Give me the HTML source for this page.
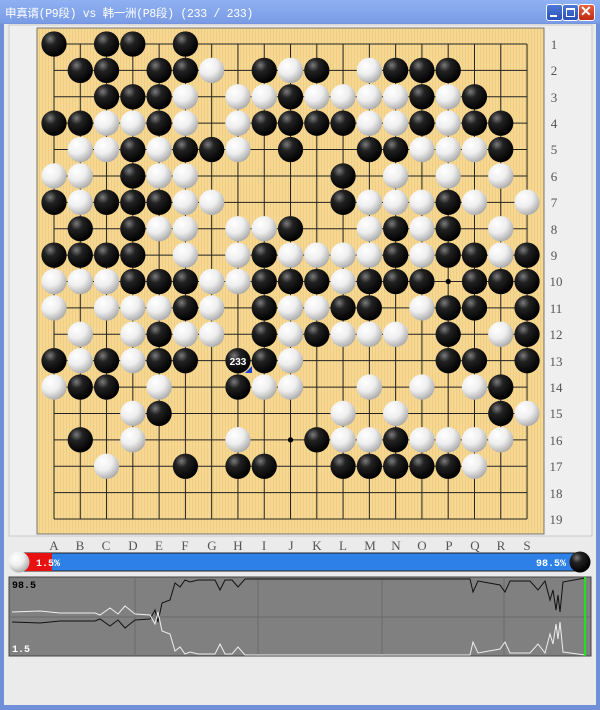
<!DOCTYPE html>
<html><head><meta charset="utf-8"><style>
body{margin:0;width:600px;height:710px;overflow:hidden;background:#6f8fd8;font-family:"Liberation Sans","Noto Sans CJK SC",sans-serif}
#win{position:absolute;left:0;top:0;width:600px;height:710px;background:linear-gradient(#8fb0f2,#7a9ce6 23px,#6f8fd8 24px);}
#title{position:absolute;left:5px;top:5px;color:#fff;font-size:11.5px;font-family:"Liberation Mono","Noto Sans CJK SC",monospace;letter-spacing:-0.3px}
#body{position:absolute;left:4px;top:24px;width:592px;height:681px;background:#ebebeb}
.btn{position:absolute;top:4px;width:15px;height:15px;border:1px solid #fff;border-radius:3px;background:linear-gradient(#4f78d8,#2850b8)}
</style></head><body>
<div id="win">
<div id="title">申真谞(P9段) vs 韩一洲(P8段) (233 / 233)</div>
<div class="btn" style="left:546px"><div style="position:absolute;left:3px;top:10px;width:7px;height:2px;background:#fff"></div></div>
<div class="btn" style="left:562px"><div style="position:absolute;left:3px;top:3px;width:7px;height:6px;border:1px solid #fff;border-top-width:2px"></div></div>
<div class="btn" style="left:578px;background:linear-gradient(#e86040,#c02810)"><div style="position:absolute;left:1px;top:-2px;color:#fff;font-size:14px;font-weight:bold">✕</div></div>
<div id="body"></div>
<svg width="600" height="710" style="position:absolute;left:0;top:0">
<defs>
<pattern id="wood" width="3" height="10" patternUnits="userSpaceOnUse"><rect width="3" height="10" fill="#f7d892"/><rect width="1" height="10" fill="#efcd82"/></pattern>
<radialGradient id="gb" cx="0.35" cy="0.3" r="0.7"><stop offset="0" stop-color="#7a7a7a"/><stop offset="0.35" stop-color="#222"/><stop offset="1" stop-color="#000"/></radialGradient>
<radialGradient id="gw" cx="0.35" cy="0.3" r="0.75"><stop offset="0" stop-color="#fff"/><stop offset="0.5" stop-color="#eee"/><stop offset="1" stop-color="#a8a8a8"/></radialGradient>
<circle id="B" r="0.48" fill="url(#gb)"/>
<circle id="W" r="0.48" fill="url(#gw)"/>
</defs>
<rect x="9" y="25" width="583" height="511" fill="#efefef" stroke="#c8c8c8"/>
<rect x="37" y="28" width="507" height="506" fill="url(#wood)" stroke="#777"/>
<g transform="translate(54,44) scale(26.28,26.39)" stroke="#222" stroke-width="1">
<path vector-effect="non-scaling-stroke" fill="none" d="M0 0H18M0 1H18M0 2H18M0 3H18M0 4H18M0 5H18M0 6H18M0 7H18M0 8H18M0 9H18M0 10H18M0 11H18M0 12H18M0 13H18M0 14H18M0 15H18M0 16H18M0 17H18M0 18H18M0 0V18M1 0V18M2 0V18M3 0V18M4 0V18M5 0V18M6 0V18M7 0V18M8 0V18M9 0V18M10 0V18M11 0V18M12 0V18M13 0V18M14 0V18M15 0V18M16 0V18M17 0V18M18 0V18"/>
<g stroke="none">
<circle cx="15" cy="9" r="0.1" fill="#000"/><circle cx="9" cy="15" r="0.1" fill="#000"/>
<use href="#B" x="0" y="0"/><use href="#B" x="2" y="0"/><use href="#B" x="3" y="0"/><use href="#B" x="5" y="0"/>
<use href="#B" x="1" y="1"/><use href="#B" x="2" y="1"/><use href="#B" x="4" y="1"/><use href="#B" x="5" y="1"/><use href="#B" x="8" y="1"/><use href="#B" x="10" y="1"/><use href="#B" x="13" y="1"/><use href="#B" x="14" y="1"/><use href="#B" x="15" y="1"/>
<use href="#W" x="6" y="1"/><use href="#W" x="9" y="1"/><use href="#W" x="12" y="1"/>
<use href="#B" x="2" y="2"/><use href="#B" x="3" y="2"/><use href="#B" x="4" y="2"/><use href="#B" x="9" y="2"/><use href="#B" x="14" y="2"/><use href="#B" x="16" y="2"/>
<use href="#W" x="5" y="2"/><use href="#W" x="7" y="2"/><use href="#W" x="8" y="2"/><use href="#W" x="10" y="2"/><use href="#W" x="11" y="2"/><use href="#W" x="12" y="2"/><use href="#W" x="13" y="2"/><use href="#W" x="15" y="2"/>
<use href="#B" x="0" y="3"/><use href="#B" x="1" y="3"/><use href="#B" x="4" y="3"/><use href="#B" x="8" y="3"/><use href="#B" x="9" y="3"/><use href="#B" x="10" y="3"/><use href="#B" x="11" y="3"/><use href="#B" x="14" y="3"/><use href="#B" x="16" y="3"/><use href="#B" x="17" y="3"/>
<use href="#W" x="2" y="3"/><use href="#W" x="3" y="3"/><use href="#W" x="5" y="3"/><use href="#W" x="7" y="3"/><use href="#W" x="12" y="3"/><use href="#W" x="13" y="3"/><use href="#W" x="15" y="3"/>
<use href="#B" x="3" y="4"/><use href="#B" x="5" y="4"/><use href="#B" x="6" y="4"/><use href="#B" x="9" y="4"/><use href="#B" x="12" y="4"/><use href="#B" x="13" y="4"/><use href="#B" x="17" y="4"/>
<use href="#W" x="1" y="4"/><use href="#W" x="2" y="4"/><use href="#W" x="4" y="4"/><use href="#W" x="7" y="4"/><use href="#W" x="14" y="4"/><use href="#W" x="15" y="4"/><use href="#W" x="16" y="4"/>
<use href="#B" x="3" y="5"/><use href="#B" x="11" y="5"/>
<use href="#W" x="0" y="5"/><use href="#W" x="1" y="5"/><use href="#W" x="4" y="5"/><use href="#W" x="5" y="5"/><use href="#W" x="13" y="5"/><use href="#W" x="15" y="5"/><use href="#W" x="17" y="5"/>
<use href="#B" x="0" y="6"/><use href="#B" x="2" y="6"/><use href="#B" x="3" y="6"/><use href="#B" x="4" y="6"/><use href="#B" x="11" y="6"/><use href="#B" x="15" y="6"/>
<use href="#W" x="1" y="6"/><use href="#W" x="5" y="6"/><use href="#W" x="6" y="6"/><use href="#W" x="12" y="6"/><use href="#W" x="13" y="6"/><use href="#W" x="14" y="6"/><use href="#W" x="16" y="6"/><use href="#W" x="18" y="6"/>
<use href="#B" x="1" y="7"/><use href="#B" x="3" y="7"/><use href="#B" x="9" y="7"/><use href="#B" x="13" y="7"/><use href="#B" x="15" y="7"/>
<use href="#W" x="4" y="7"/><use href="#W" x="5" y="7"/><use href="#W" x="7" y="7"/><use href="#W" x="8" y="7"/><use href="#W" x="12" y="7"/><use href="#W" x="14" y="7"/><use href="#W" x="17" y="7"/>
<use href="#B" x="0" y="8"/><use href="#B" x="1" y="8"/><use href="#B" x="2" y="8"/><use href="#B" x="3" y="8"/><use href="#B" x="8" y="8"/><use href="#B" x="13" y="8"/><use href="#B" x="15" y="8"/><use href="#B" x="16" y="8"/><use href="#B" x="18" y="8"/>
<use href="#W" x="5" y="8"/><use href="#W" x="7" y="8"/><use href="#W" x="9" y="8"/><use href="#W" x="10" y="8"/><use href="#W" x="11" y="8"/><use href="#W" x="12" y="8"/><use href="#W" x="14" y="8"/><use href="#W" x="17" y="8"/>
<use href="#B" x="3" y="9"/><use href="#B" x="4" y="9"/><use href="#B" x="5" y="9"/><use href="#B" x="8" y="9"/><use href="#B" x="9" y="9"/><use href="#B" x="10" y="9"/><use href="#B" x="12" y="9"/><use href="#B" x="13" y="9"/><use href="#B" x="14" y="9"/><use href="#B" x="16" y="9"/><use href="#B" x="17" y="9"/><use href="#B" x="18" y="9"/>
<use href="#W" x="0" y="9"/><use href="#W" x="1" y="9"/><use href="#W" x="2" y="9"/><use href="#W" x="6" y="9"/><use href="#W" x="7" y="9"/><use href="#W" x="11" y="9"/>
<use href="#B" x="5" y="10"/><use href="#B" x="8" y="10"/><use href="#B" x="11" y="10"/><use href="#B" x="12" y="10"/><use href="#B" x="15" y="10"/><use href="#B" x="16" y="10"/><use href="#B" x="18" y="10"/>
<use href="#W" x="0" y="10"/><use href="#W" x="2" y="10"/><use href="#W" x="3" y="10"/><use href="#W" x="4" y="10"/><use href="#W" x="6" y="10"/><use href="#W" x="9" y="10"/><use href="#W" x="10" y="10"/><use href="#W" x="14" y="10"/>
<use href="#B" x="4" y="11"/><use href="#B" x="8" y="11"/><use href="#B" x="10" y="11"/><use href="#B" x="15" y="11"/><use href="#B" x="18" y="11"/>
<use href="#W" x="1" y="11"/><use href="#W" x="3" y="11"/><use href="#W" x="5" y="11"/><use href="#W" x="6" y="11"/><use href="#W" x="9" y="11"/><use href="#W" x="11" y="11"/><use href="#W" x="12" y="11"/><use href="#W" x="13" y="11"/><use href="#W" x="17" y="11"/>
<use href="#B" x="0" y="12"/><use href="#B" x="2" y="12"/><use href="#B" x="4" y="12"/><use href="#B" x="5" y="12"/><use href="#B" x="7" y="12"/><use href="#B" x="8" y="12"/><use href="#B" x="15" y="12"/><use href="#B" x="16" y="12"/><use href="#B" x="18" y="12"/>
<use href="#W" x="1" y="12"/><use href="#W" x="3" y="12"/><use href="#W" x="9" y="12"/>
<use href="#B" x="1" y="13"/><use href="#B" x="2" y="13"/><use href="#B" x="7" y="13"/><use href="#B" x="17" y="13"/>
<use href="#W" x="0" y="13"/><use href="#W" x="4" y="13"/><use href="#W" x="8" y="13"/><use href="#W" x="9" y="13"/><use href="#W" x="12" y="13"/><use href="#W" x="14" y="13"/><use href="#W" x="16" y="13"/>
<use href="#B" x="4" y="14"/><use href="#B" x="17" y="14"/>
<use href="#W" x="3" y="14"/><use href="#W" x="11" y="14"/><use href="#W" x="13" y="14"/><use href="#W" x="18" y="14"/>
<use href="#B" x="1" y="15"/><use href="#B" x="10" y="15"/><use href="#B" x="13" y="15"/>
<use href="#W" x="3" y="15"/><use href="#W" x="7" y="15"/><use href="#W" x="11" y="15"/><use href="#W" x="12" y="15"/><use href="#W" x="14" y="15"/><use href="#W" x="15" y="15"/><use href="#W" x="16" y="15"/><use href="#W" x="17" y="15"/>
<use href="#B" x="5" y="16"/><use href="#B" x="7" y="16"/><use href="#B" x="8" y="16"/><use href="#B" x="11" y="16"/><use href="#B" x="12" y="16"/><use href="#B" x="13" y="16"/><use href="#B" x="14" y="16"/><use href="#B" x="15" y="16"/>
<use href="#W" x="2" y="16"/><use href="#W" x="16" y="16"/>
</g></g>
<text x="238" y="365" fill="#fff" font-size="10" font-family="Liberation Sans" text-anchor="middle" font-weight="bold">233</text>
<path d="M245 373h7v-7z" fill="#2040d0"/>
<g font-family="Liberation Serif,serif" font-size="13" fill="#555" text-anchor="middle">
<text x="554" y="49">1</text><text x="554" y="75">2</text><text x="554" y="102">3</text><text x="554" y="128">4</text><text x="554" y="154">5</text><text x="554" y="181">6</text><text x="554" y="207">7</text><text x="554" y="234">8</text><text x="554" y="260">9</text><text x="556" y="286">10</text><text x="556" y="313">11</text><text x="556" y="339">12</text><text x="556" y="366">13</text><text x="556" y="392">14</text><text x="556" y="418">15</text><text x="556" y="445">16</text><text x="556" y="471">17</text><text x="556" y="498">18</text><text x="556" y="524">19</text>
<text x="54" y="550">A</text><text x="80" y="550">B</text><text x="106" y="550">C</text><text x="133" y="550">D</text><text x="159" y="550">E</text><text x="185" y="550">F</text><text x="212" y="550">G</text><text x="238" y="550">H</text><text x="264" y="550">I</text><text x="291" y="550">J</text><text x="317" y="550">K</text><text x="343" y="550">L</text><text x="370" y="550">M</text><text x="396" y="550">N</text><text x="422" y="550">O</text><text x="449" y="550">P</text><text x="475" y="550">Q</text><text x="501" y="550">R</text><text x="527" y="550">S</text>
</g>
<rect x="20" y="553" width="560" height="18" fill="#2c80e8" stroke="#222"/>
<rect x="20" y="553" width="32" height="18" fill="#e81010"/>
<circle cx="19" cy="562" r="10.5" fill="url(#gw)"/>
<circle cx="580" cy="562" r="10.5" fill="url(#gb)"/>
<text x="36" y="566" fill="#fff" font-size="10" font-family="Liberation Mono" font-weight="bold">1.5%</text>
<text x="536" y="566" fill="#fff" font-size="10" font-family="Liberation Mono" font-weight="bold">98.5%</text>
<rect x="9" y="577" width="582" height="79" fill="#808080" stroke="#444"/>
<path d="M135 577V656M258 577V656M382 577V656M504 577V656M9 617H591" stroke="#6a6a6a"/>
<polyline fill="none" stroke="#111" stroke-width="1" points="12,622 40,623 60,621 95,621 100,619 110,626 118,620 125,628 135,620 150,619 155,610 158,622 162,603 170,600 175,583 180,587 185,580 190,582 198,580 215,580 220,590 225,580 232,580 238,587 245,579 470,579 473,592 478,581 500,585 505,592 510,581 530,581 538,590 545,581 550,600 553,590 556,610 558,595 560,612 563,582 585,578"/>
<polyline fill="none" stroke="#eee" stroke-width="1" points="12,612 40,611 60,613 95,613 100,615 110,608 118,614 125,606 135,614 150,615 155,624 158,612 162,631 170,634 175,651 180,647 185,654 190,652 198,654 215,654 220,644 225,654 232,654 238,647 245,655 470,655 473,642 478,653 500,649 505,642 510,653 530,653 538,644 545,653 550,634 553,644 556,624 558,639 560,622 563,652 585,655"/>
<line x1="585" y1="577" x2="585" y2="656" stroke="#20e020" stroke-width="2"/>
<text x="12" y="588" font-size="10" font-family="Liberation Mono" font-weight="bold" fill="#000">98.5</text>
<text x="12" y="652" font-size="10" font-family="Liberation Mono" font-weight="bold" fill="#fff">1.5</text>
</svg>
</div>
</body></html>
